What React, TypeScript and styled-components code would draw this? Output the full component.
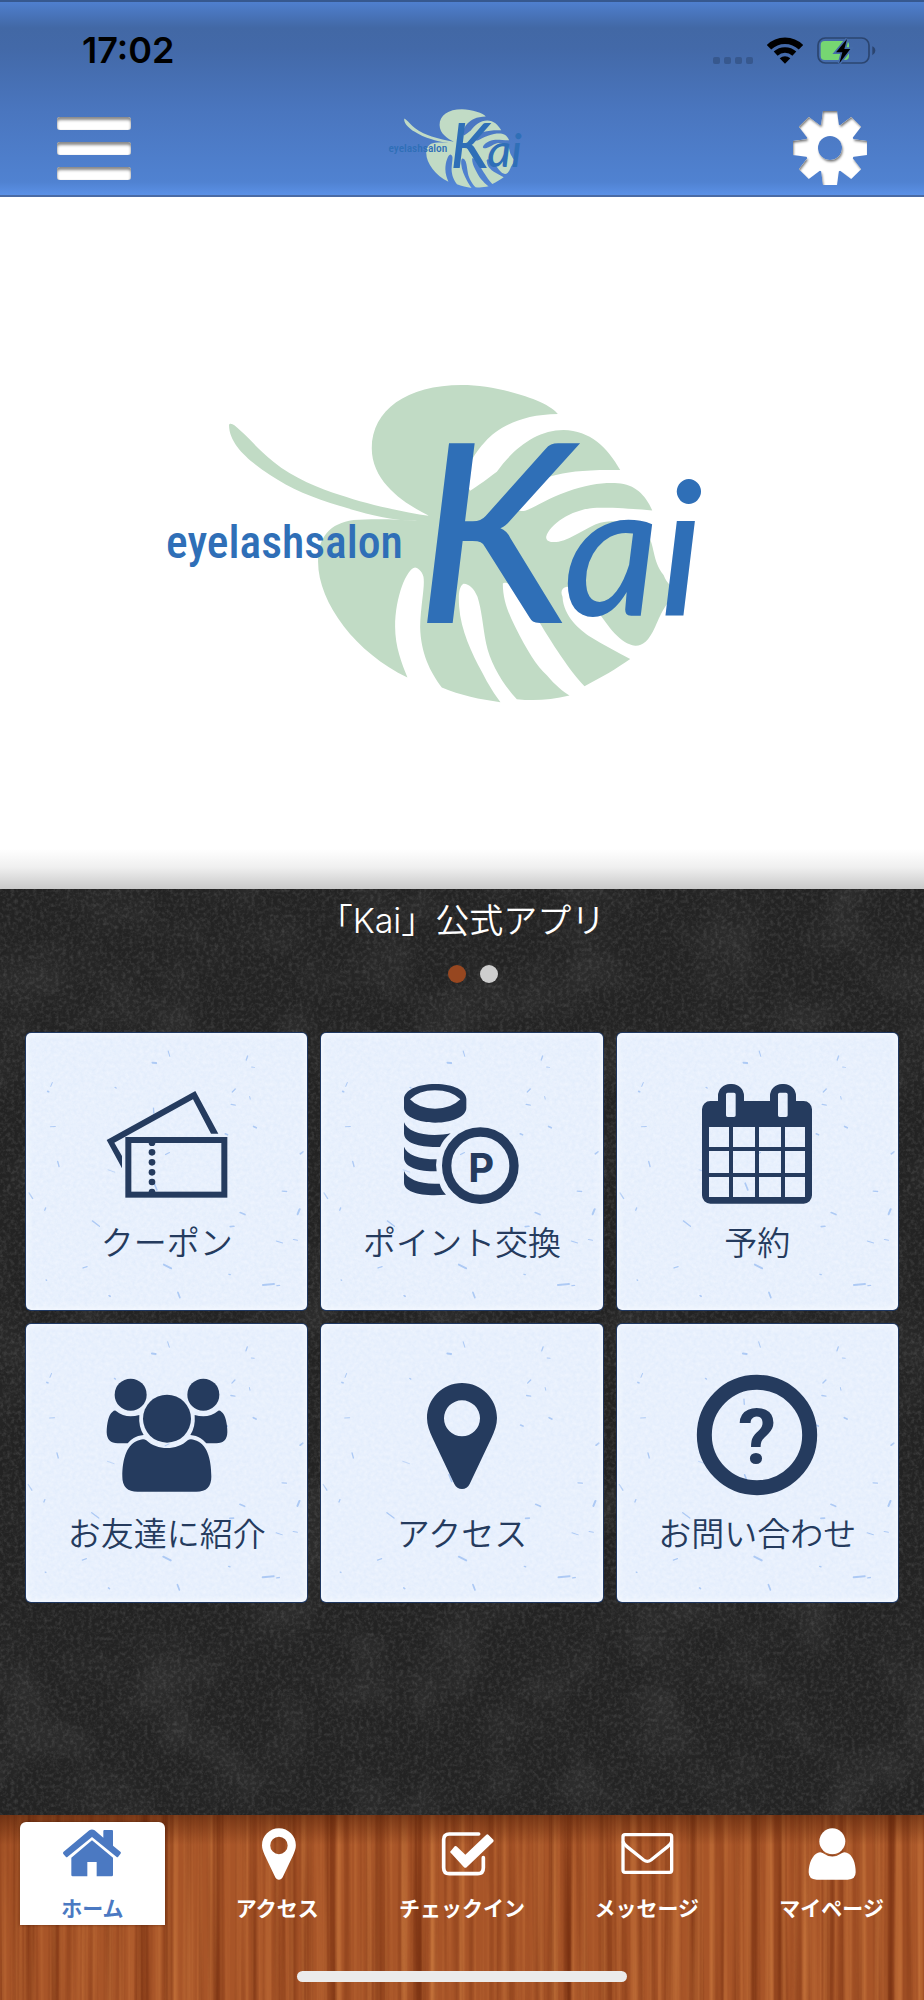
import React from "react";
import styled, { createGlobalStyle, css } from "styled-components";

const navy = "#253b5e";
const blue = "#4b79c2";
const jp = `Inter, "Noto Sans CJK JP", sans-serif`;

const svgUrl = (body: string, w: number, h: number, box = `0 0 ${w} ${h}`) =>
  `url("data:image/svg+xml,${encodeURIComponent(
    `<svg xmlns="http://www.w3.org/2000/svg" width="${w}" height="${h}" viewBox="${box}">${body}</svg>`
  )}")`;

const noise = (id: string, freq: string, seed: number, matrix: string) =>
  `<filter id="${id}" x="0" y="0" width="100%" height="100%" color-interpolation-filters="sRGB"><feTurbulence type="fractalNoise" baseFrequency="${freq}" numOctaves="3" seed="${seed}" stitchTiles="stitch"/><feColorMatrix values="${matrix}"/></filter><rect width="100%" height="100%" filter="url(#${id})"/>`;

const slate = svgUrl(
  noise("a", "0.27", 4, "0 0 0 0 1  0 0 0 0 1  0 0 0 0 1  0.24 0 0 0 -0.1") +
    noise("b", "0.014", 9, "0 0 0 0 1  0 0 0 0 1  0 0 0 0 1  0.14 0 0 0 -0.065"),
  900,
  900
);

const wood = svgUrl(
  noise("a", "0.08 0.0015", 3, "0 0 0 0 0.42  0 0 0 0 0.15  0 0 0 0 0.04  1.8 0 0 0 -0.75") +
    noise("b", "0.14 0.0015", 12, "0 0 0 0 0.82  0 0 0 0 0.5  0 0 0 0 0.26  0 1.5 0 0 -0.64"),
  924,
  700
);

const fibres: [number, number, number, number, number][] = [
  [474, 94, 479, 110, 3], [427, 129, 438, 130, 6], [712, 109, 708, 121, 4], [724, 142, 733, 143, 3],
  [127, 188, 122, 200, 3], [675, 208, 666, 217, 4], [663, 254, 675, 256, 4], [730, 320, 738, 324, 5],
  [645, 342, 652, 345, 5], [870, 402, 878, 396, 5], [143, 425, 147, 440, 4], [430, 265, 431, 280, 4],
  [466, 404, 478, 398, 3], [294, 450, 314, 457, 2], [432, 490, 440, 510, 5], [816, 514, 829, 515, 4],
  [57, 519, 68, 536, 4], [104, 571, 107, 564, 4], [690, 578, 704, 584, 5], [868, 568, 862, 583, 6],
  [247, 603, 268, 619, 4], [660, 620, 671, 619, 5], [798, 663, 817, 669, 3], [849, 659, 862, 661, 3],
  [219, 744, 231, 740, 4], [461, 734, 483, 745, 6], [758, 795, 791, 792, 6], [800, 797, 808, 796, 4],
  [503, 817, 509, 833, 5], [656, 763, 660, 764, 4], [121, 321, 136, 320, 3], [113, 215, 116, 216, 5],
  [297, 827, 300, 829, 5], [315, 203, 318, 205, 4], [718, 230, 720, 238, 3], [108, 780, 110, 781, 4],
];

const paper = svgUrl(
  `<filter id="a" x="0" y="0" width="100%" height="100%" color-interpolation-filters="sRGB"><feTurbulence type="fractalNoise" baseFrequency="0.09" numOctaves="3" seed="7"/><feColorMatrix values="0 0 0 0 0.78  0 0 0 0 0.86  0 0 0 0 0.97  0.4 0 0 0 -0.04"/></filter><rect x="48" y="40" width="845" height="830" filter="url(#a)"/>` +
    fibres
      .map(
        ([x1, y1, x2, y2, w]) =>
          `<path d="M${x1} ${y1} L${x2} ${y2}" stroke="#a3c3f3" stroke-width="${w}" stroke-linecap="round" opacity="0.85"/>`
      )
      .join(""),
  282,
  277,
  "48 40 845 830"
);

const Global = createGlobalStyle`
  *, *::before, *::after { box-sizing: border-box; }
  body { margin: 0; background: #222; font-family: ${jp}; }
  button { padding: 0; border: 0; background: none; cursor: pointer; }
  a { color: inherit; text-decoration: none; }
  svg { display: block; overflow: visible; }
`;

const Page = styled.div`
  display: flex;
  flex-direction: column;
  min-height: 100vh;
`;

const Header = styled.header`
  padding: 2px 57px 0;
  border-top: 2px solid #36588f;
  border-bottom: 2px solid #4a6ba5;
  background: linear-gradient(
    #4f7fce 0,
    #4268a5 26px,
    #4369a8 46px,
    #4a76bf 110px,
    #5082d1 180px,
    #5b91e7 100%
  );
`;

const StatusBar = styled.div`
  display: flex;
  align-items: center;
  justify-content: space-between;
  height: 97px;
  margin-right: -9px;
  padding: 0 0 5px 25px;
`;

const Clock = styled.time`
  font: 600 36px/44px Inter, sans-serif;
  color: #000;
`;

const StatusIcons = styled.div`
  display: flex;
  align-items: center;
  gap: 14px;
`;

const Signal = styled.div`
  display: flex;
  gap: 4px;
  align-self: flex-end;
`;

const SignalDot = styled.span`
  width: 7px;
  height: 7px;
  border-radius: 2px;
  background: #37588e;
`;

const TopNav = styled.div`
  display: flex;
  align-items: center;
  justify-content: space-between;
  height: 94px;
`;

const MenuButton = styled.button`
  display: grid;
  gap: 12px;
  width: 74px;
`;

const MenuBar = styled.span`
  height: 13px;
  border-radius: 3px;
  background: #fff;
  box-shadow: inset 0 3px 3px #8a8a8a, inset 0 0 1px #aaa;
`;

const GearButton = styled.button`
  width: 74px;
`;

const Hero = styled.section`
  display: grid;
  place-items: center;
  aspect-ratio: 924 / 692;
  background: linear-gradient(#fff calc(100% - 40px), #f0f0f0 calc(100% - 22px), #c9c9c9);
`;

const LogoSvg = styled.svg<{ $width: string }>`
  width: ${(p) => p.$width};
  height: auto;
`;

const Main = styled.main`
  flex: 1;
  background: #232323 ${slate};
`;

const Title = styled.h1`
  margin: 0;
  padding-top: 8px;
  font-weight: 350;
  font-size: 34px;
  line-height: 48px;
  text-align: center;
  color: #fff;
`;

const Dots = styled.div`
  display: flex;
  justify-content: center;
  gap: 14px;
  padding: 20px 0 50px 22px;
`;

const Dot = styled.button<{ $active?: boolean }>`
  width: 18px;
  height: 18px;
  border-radius: 50%;
  background: ${(p) => (p.$active ? "#974720" : "#cecece")};
`;

const Grid = styled.nav`
  display: grid;
  grid-template-columns: repeat(3, 1fr);
  gap: 14px;
  padding: 0 26px 40px;
`;

const Tile = styled.a`
  display: flex;
  flex-direction: column;
  align-items: center;
  gap: 15px;
  aspect-ratio: 282 / 278;
  padding-top: 51px;
  border-radius: 5px;
  background: #eef4fe ${paper} center / cover;
  box-shadow: 0 0 0 1px #1f3760, inset 0 0 6px 1px #f8fbff;
  color: ${navy};
  fill: currentColor;
`;

const TileLabel = styled.span`
  font-weight: 350;
  font-size: 33px;
  line-height: 48px;
  white-space: nowrap;
`;

const Footer = styled.footer`
  display: flex;
  flex-direction: column;
  align-items: center;
  gap: 46px;
  padding: 7px 0 18px;
  background: linear-gradient(rgba(70, 24, 4, 0.5), rgba(70, 24, 4, 0) 30px), #a85528 ${wood};
`;

const Tabs = styled.nav`
  display: grid;
  grid-template-columns: repeat(5, 1fr);
  width: 100%;
`;

const Tab = styled.a<{ $active?: boolean }>`
  display: flex;
  flex-direction: column;
  align-items: center;
  gap: 14px;
  height: 103px;
  margin: 0 20px;
  padding-top: 6px;
  color: #fff;
  fill: currentColor;
  ${(p) =>
    p.$active &&
    css`
      border-radius: 6px 6px 0 0;
      background: #fff;
      color: ${blue};
      box-shadow: 0 0 3px rgba(60, 20, 0, 0.6);
    `}
`;

const TabLabel = styled.span`
  font-weight: 700;
  font-size: 21px;
  line-height: 30px;
  white-space: nowrap;
`;

const HomeIndicator = styled.div`
  width: 330px;
  max-width: 60%;
  height: 11px;
  border-radius: 6px;
  background: #ebebeb;
`;

function Logo({ width, label }: { width: string; label: string }) {
  return (
    <LogoSvg $width={width} viewBox="-720 30 1812 978" role="img" aria-label={label}>
      <g fill="#c1dbc5">
        <path d="M-513 165C-512 158-503 161-497 166C-450 205-430 235-380 275C-320 325-240 355-180 375C-100 402 0 425 90 438V452H20C-60 445-140 420-180 408C-260 385-330 355-390 315C-450 275-513 225-513 165Z" />
        <path d="M85 436C20 405-85 340-85 235C-85 120 20 45 185 45C300 45 450 95 473 132C360 133 290 175 255 215C215 258 180 320 210 362C230 350 270 320 290 305C340 235 410 180 490 180C570 182 620 230 660 300C560 298 500 305 455 318C400 335 345 375 340 405C338 420 355 425 375 422C410 410 440 385 500 365C570 340 630 335 670 342C720 352 745 395 756 421C680 415 640 412 590 413C520 415 450 460 438 500C437 515 455 518 475 515C520 505 560 470 600 458C660 448 710 455 740 490C765 525 755 570 790 615C800 640 815 655 840 663C790 700 780 740 765 770C745 815 725 828 705 827C660 822 625 770 590 720C575 695 530 655 500 650C485 652 480 665 487 680C490 740 540 780 570 800C610 825 650 845 690 867C650 895 600 925 553 948C510 905 450 810 420 760C400 720 385 700 378 685C360 660 320 630 308 640C308 690 325 730 345 770C380 840 410 890 440 915C465 945 490 965 508 976C450 990 400 993 350 987C310 945 270 880 258 820C248 770 245 720 232 680C222 655 205 640 190 641C175 650 175 680 177 710C182 780 215 850 245 905C265 945 285 975 301 996C240 988 180 975 125 952C90 905 62 850 60 770C62 700 75 650 70 620C65 600 50 592 45 592C20 595-15 680-15 770C-15 830 5 880 22 922C-130 850-246 700-246 575C-246 500-210 460-140 450C-80 445 0 448 45 452Z" />
      </g>
      <g fill="#2f6fb7">
        <text x="-702" y="565" fontFamily="'Roboto Condensed', 'Liberation Sans Narrow', Roboto, sans-serif" fontWeight="500" fontSize="137">
          eyelashsalon
        </text>
        <text x="46" y="760" fontFamily="'Brush Script MT', Lato, cursive" fontStyle="italic" fontWeight="500" fontSize="750">
          K<tspan x="490" y="738" fontSize="560">ai</tspan>
        </text>
      </g>
    </LogoSvg>
  );
}

const TileSvg = ({ children }: { children: React.ReactNode }) => (
  <svg width="120" height="120" viewBox="0 0 360 360" aria-hidden="true">
    {children}
  </svg>
);

const TabSvg = ({ box = "0 0 180 156", children }: { box?: string; children: React.ReactNode }) => (
  <svg width="60" height="52" viewBox={box} aria-hidden="true">
    {children}
  </svg>
);

const pinPath =
  "M180 24C122 24 75 71 75 129C75 150 82 168 92 190L157 327C162 337 170 342 180 342S198 337 203 327L268 190C278 168 285 150 285 129C285 71 238 24 180 24ZM180 76A54 54 0 1 1 180 184A54 54 0 1 1 180 76Z";

const friendPath =
  "M26 107C40 119 55 124 71 124Q84 124 97 120Q94 155 110 180C85 182 72 194 62 205H32Q0 205-1 172C-1 145 5 118 17 110Q21 106 26 107Z";

const cells = [129, 201, 279]
  .map((y, r) =>
    [36, 108, 186, 264]
      .map((x, c) => {
        const w = c === 0 || c === 3 ? 60 : 66;
        const h = r === 1 ? 66 : 60;
        return `M${x} ${y}h${w}v${h}h${-w}Z`;
      })
      .join("")
  )
  .join("");

const tiles = [
  {
    label: "クーポン",
    href: "#coupon",
    icon: (
      <TileSvg>
        <path d="M-1 168L265 21L334 149H312L258 46L22 176L45 216V253Z" />
        <rect x="64" y="168" width="288" height="164" fill="none" stroke="currentColor" strokeWidth="18" />
        {[205, 235, 265, 294].map((y) => (
          <circle key={y} cx="135" cy={y} r="10" />
        ))}
        <path d="M125 176A10 10 0 0 0 145 176ZM125 324A10 10 0 0 1 145 324Z" />
      </TileSvg>
    ),
  },
  {
    label: "ポイント交換",
    href: "#points",
    icon: (
      <TileSvg>
        <path
          fillRule="evenodd"
          d="M6 45C6 20 45 0 100 0S193 20 193 45V72C193 98 150 116 100 116S6 98 6 72ZM24 46Q50 19 99 19Q148 19 175 46Q148 74 99 74Q50 74 24 46Z"
        />
        <path d="M6 115C14 138 50 153 98 153C115 153 132 151 146 148Q124 166 114 189C60 191 6 180 6 148Z" />
        <path d="M6 188C14 211 50 226 104 226Q100 244 104 262C50 262 6 250 6 221Z" />
        <path d="M6 261C14 284 50 299 98 299H113Q118 318 132 332C60 338 6 325 6 296Z" />
        <circle cx="235" cy="245" r="101" fill="none" stroke="currentColor" strokeWidth="28" />
        <text x="238" y="294" textAnchor="middle" fontFamily="Inter, sans-serif" fontWeight="700" fontSize="120">
          P
        </text>
      </TileSvg>
    ),
  },
  {
    label: "予約",
    href: "#reserve",
    icon: (
      <TileSvg>
        <path
          fillRule="evenodd"
          d={`M40 51H63V36A36 36 0 0 1 99 0H105A36 36 0 0 1 141 36V51H219V36A36 36 0 0 1 255 0H261A36 36 0 0 1 297 36V51H320A25 25 0 0 1 345 76V334A25 25 0 0 1 320 359H40A25 25 0 0 1 15 334V76A25 25 0 0 1 40 51ZM92 26H111Q116 26 116 31V94Q116 99 111 99H92Q87 99 87 94V31Q87 26 92 26ZM248 26H267Q272 26 272 31V94Q272 99 267 99H248Q243 99 243 94V31Q243 26 248 26Z${cells}`}
        />
      </TileSvg>
    ),
  },
  {
    label: "お友達に紹介",
    href: "#invite",
    icon: (
      <TileSvg>
        <circle cx="71" cy="59" r="48" />
        <circle cx="289" cy="59" r="48" />
        <circle cx="180" cy="131" r="72" />
        <path d={friendPath} />
        <path d={friendPath} transform="translate(360 0) scale(-1 1)" />
        <path d="M98 195Q110 190 118 196C150 227 210 227 242 196Q250 190 262 195C300 205 313 250 313 305Q313 350 268 350H92Q46 350 46 305C46 250 60 205 98 195Z" />
      </TileSvg>
    ),
  },
  {
    label: "アクセス",
    href: "#access",
    icon: (
      <TileSvg>
        <path fillRule="evenodd" d={pinPath} />
      </TileSvg>
    ),
  },
  {
    label: "お問い合わせ",
    href: "#contact",
    icon: (
      <TileSvg>
        <circle cx="180" cy="180" r="158" fill="none" stroke="currentColor" strokeWidth="45" />
        <text x="180" y="263" textAnchor="middle" fontFamily="Roboto, sans-serif" fontWeight="700" fontSize="230">
          ?
        </text>
      </TileSvg>
    ),
  },
];

const tabs = [
  {
    label: "ホーム",
    href: "#home",
    icon: (
      <TabSvg>
        <path d="M82 7Q90 2 98 7L124 29V9Q124 6 127 6H150Q153 6 153 9V53L176 72Q178 75 175 78L168 87Q166 89 163 86L90 27L17 86Q14 89 12 87L4 78Q2 75 4 72Z" />
        <path d="M90 37L153 89V141Q153 145 149 145H104V102H76V145H32Q28 145 28 141V89Z" />
      </TabSvg>
    ),
  },
  {
    label: "アクセス",
    href: "#map",
    icon: (
      <TabSvg box="-18 22 372 322">
        <path fillRule="evenodd" d={pinPath} />
      </TabSvg>
    ),
  },
  {
    label: "チェックイン",
    href: "#checkin",
    icon: (
      <TabSvg>
        <path
          d="M140 18H52Q35 18 35 35V119Q35 137 52 137H137Q154 137 154 119V89"
          fill="none"
          stroke="currentColor"
          strokeWidth="11"
          strokeLinecap="round"
        />
        <path d="M54 72L68 55Q72 53 75 56L100 80L163 20Q166 17 169 20L184 35Q186 38 184 41L104 118Q100 121 96 118Z" />
      </TabSvg>
    ),
  },
  {
    label: "メッセージ",
    href: "#messages",
    icon: (
      <TabSvg>
        <g fill="none" stroke="currentColor" strokeWidth="10">
          <rect x="18" y="20" width="146" height="113" rx="6" />
          <path d="M18 40Q20 48 30 56L80 96Q91 104 102 96L152 56Q162 48 164 40" />
        </g>
      </TabSvg>
    ),
  },
  {
    label: "マイページ",
    href: "#mypage",
    icon: (
      <TabSvg>
        <circle cx="91" cy="40" r="39" />
        <path d="M48 74Q55 71 62 75Q91 96 120 75Q127 71 134 74C152 80 161 105 161 133Q161 155 137 155H44Q20 155 20 133C20 105 32 80 48 74Z" />
      </TabSvg>
    ),
  },
];

function Gear() {
  return (
    <svg width="74" height="74" viewBox="0 0 74 74" aria-hidden="true">
      <defs>
        <mask id="gear-shape">
          <g fill="#fff">
            <circle cx="37" cy="37" r="25" />
            {[0, 45, 90, 135, 180, 225, 270, 315].map((a) => (
              <polygon key={a} points="30,0 44,0 46,15 28,15" transform={`rotate(${a} 37 37)`} />
            ))}
          </g>
          <circle cx="37" cy="37" r="12" fill="#000" />
        </mask>
        <filter id="gear-inset">
          <feOffset dy="2" dx="1" />
          <feGaussianBlur stdDeviation="1" result="moved" />
          <feComposite in="SourceAlpha" in2="moved" operator="out" result="edge" />
          <feFlood floodColor="#777" />
          <feComposite in2="edge" operator="in" result="shade" />
          <feMerge>
            <feMergeNode in="SourceGraphic" />
            <feMergeNode in="shade" />
          </feMerge>
        </filter>
      </defs>
      <g filter="url(#gear-inset)">
        <rect width="74" height="74" fill="#fff" mask="url(#gear-shape)" />
      </g>
    </svg>
  );
}

export default function App() {
  return (
    <Page>
      <Global />
      <Header>
        <StatusBar>
          <Clock>17:02</Clock>
          <StatusIcons>
            <Signal>
              {[0, 1, 2, 3].map((i) => (
                <SignalDot key={i} />
              ))}
            </Signal>
            <svg width="36" height="27" viewBox="0 0 108 81" aria-hidden="true">
              <g fill="none" stroke="#000">
                <path d="M6 31A68 68 0 0 1 102 31" strokeWidth="19" />
                <path d="M26 50A41 41 0 0 1 82 50" strokeWidth="17" />
              </g>
              <path d="M54 80L38 64Q54 52 70 64Z" />
            </svg>
            <svg width="59" height="27" viewBox="0 0 177 81" aria-hidden="true">
              <rect x="3" y="3" width="153" height="75" rx="22" fill="none" stroke="#2b4570" strokeWidth="5" />
              <rect x="11" y="12" width="85" height="57" rx="12" fill="#76d672" />
              <path d="M166 28Q175 32 175 41Q175 50 166 55Z" fill="#2b4570" />
              <path d="M90 6L57 46H76L67 79L100 36H82Z" stroke="#456caa" strokeWidth="10" paintOrder="stroke" />
            </svg>
          </StatusIcons>
        </StatusBar>
        <TopNav>
          <MenuButton aria-label="メニュー">
            <MenuBar />
            <MenuBar />
            <MenuBar />
          </MenuButton>
          <Logo width="150px" label="eyelashsalon Kai" />
          <GearButton aria-label="設定">
            <Gear />
          </GearButton>
        </TopNav>
      </Header>
      <Hero>
        <Logo width="65.4%" label="eyelashsalon Kai" />
      </Hero>
      <Main>
        <Title>「Kai」公式アプリ</Title>
        <Dots>
          <Dot $active aria-label="1枚目" />
          <Dot aria-label="2枚目" />
        </Dots>
        <Grid>
          {tiles.map((t) => (
            <Tile key={t.href} href={t.href}>
              {t.icon}
              <TileLabel>{t.label}</TileLabel>
            </Tile>
          ))}
        </Grid>
      </Main>
      <Footer>
        <Tabs>
          {tabs.map((t, i) => (
            <Tab key={t.href} href={t.href} $active={i === 0}>
              {t.icon}
              <TabLabel>{t.label}</TabLabel>
            </Tab>
          ))}
        </Tabs>
        <HomeIndicator />
      </Footer>
    </Page>
  );
}
